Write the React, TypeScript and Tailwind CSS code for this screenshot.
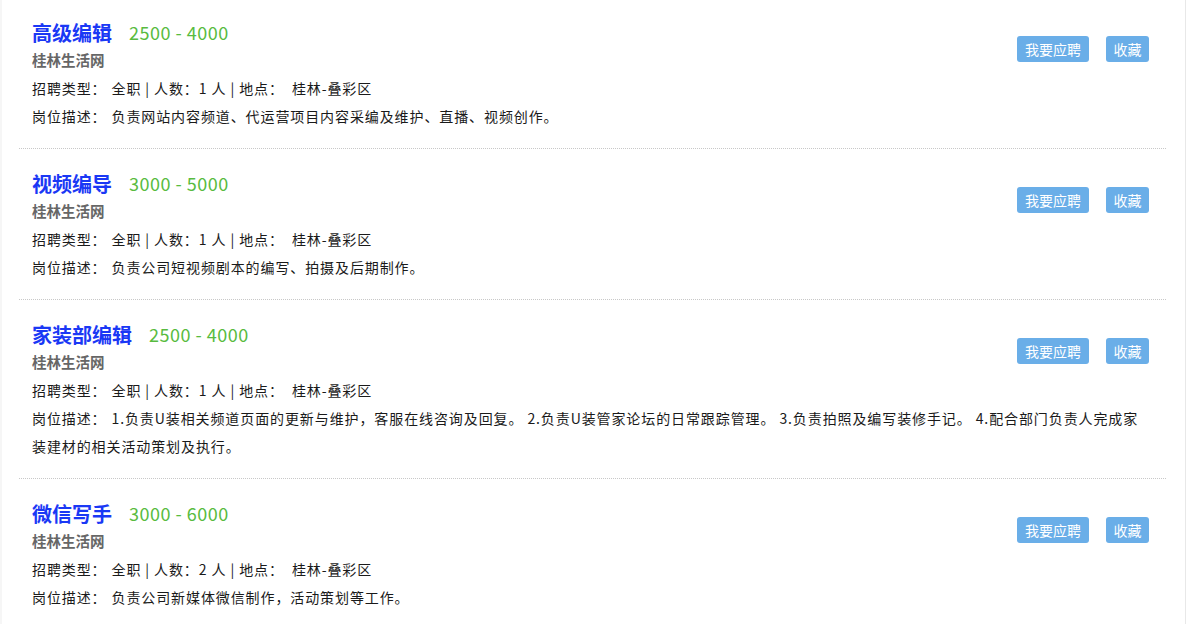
const jobs = [
  {
    title: "高级编辑",
    salary: "2500 - 4000",
    count: 1,
    desc: "负责网站内容频道、代运营项目内容采编及维护、直播、视频创作。",
  },
  {
    title: "视频编导",
    salary: "3000 - 5000",
    count: 1,
    desc: "负责公司短视频剧本的编写、拍摄及后期制作。",
  },
  {
    title: "家装部编辑",
    salary: "2500 - 4000",
    count: 1,
    desc: "1.负责U装相关频道页面的更新与维护，客服在线咨询及回复。 2.负责U装管家论坛的日常跟踪管理。 3.负责拍照及编写装修手记。 4.配合部门负责人完成家装建材的相关活动策划及执行。",
  },
  {
    title: "微信写手",
    salary: "3000 - 6000",
    count: 2,
    desc: "负责公司新媒体微信制作，活动策划等工作。",
  },
];

export default function App() {
  return (
    <div className="min-h-screen bg-white font-['Noto_Sans_CJK_SC','Noto_Sans',sans-serif]">
      <div className="h-[624px] overflow-hidden border-l-2 border-r border-l-[#f6f6f6] border-r-[#e8e8e8] w-[1186px] pl-[17px] pr-[19px]">
        <div className="-mt-[2px]">
          {jobs.map((j, i) => (
            <div
              key={j.title}
              className={
                "pl-[13px] pr-[17px] pt-[21px] pb-[18px] " +
                (i < jobs.length - 1 ? "border-b border-dotted border-[#c8c8c8]" : "")
              }
            >
              <div className="float-right mt-[17px] flex gap-[17px]">
                <button className="h-[26px] w-[72px] rounded-[3px] bg-[#6aaee8] text-[14px] leading-[26px] text-white">
                  我要应聘
                </button>
                <button className="h-[26px] w-[43px] rounded-[3px] bg-[#6aaee8] text-[14px] leading-[26px] text-white">
                  收藏
                </button>
              </div>
              <div className="flex items-center h-[27px]">
                <span className="text-[20px] font-bold text-[#1a38f5]">{j.title}</span>
                <span className="ml-[17px] text-[18px] tracking-[0.5px] text-[#58bb40]">{j.salary}</span>
              </div>
              <div className="text-[14.5px] leading-[28px] font-bold text-[#666]">桂林生活网</div>
              <div className="text-[14px] leading-[28px] text-[#1a1a1a] tracking-[0.9px]">
                <span className="mr-[5px]">招聘类型：</span>全职 | 人数：{j.count} 人 | 地点：&nbsp; 桂林-叠彩区
              </div>
              <div className="text-[14px] leading-[28px] text-[#1a1a1a] tracking-[0.9px]">
                <span className="mr-[5px]">岗位描述：</span>{j.desc}
              </div>
            </div>
          ))}
        </div>
      </div>
    </div>
  );
}
